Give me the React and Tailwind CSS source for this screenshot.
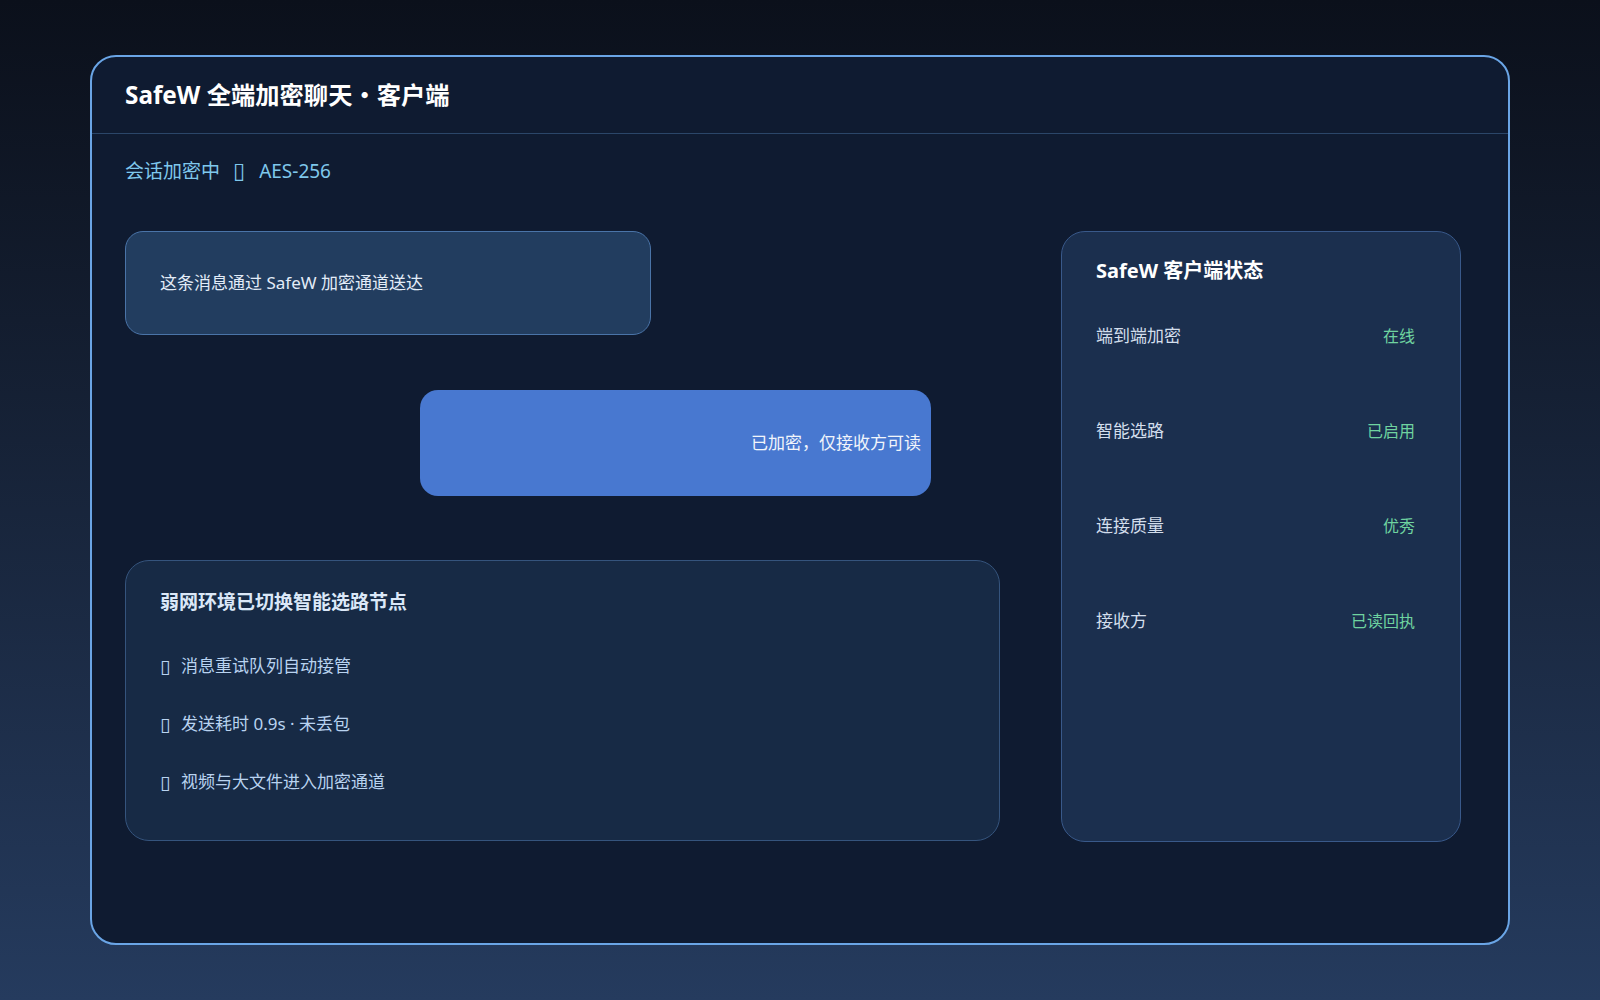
import React from "react";

const statusRows = [
  { label: "端到端加密", value: "在线" },
  { label: "智能选路", value: "已启用" },
  { label: "连接质量", value: "优秀" },
  { label: "接收方", value: "已读回执" },
];

const notes = ["消息重试队列自动接管", "发送耗时 0.9s · 未丢包", "视频与大文件进入加密通道"];

const App = () => {
  return (
    <div className="min-h-screen w-full bg-gradient-to-b from-[#0b101b] to-[#253b5e] flex justify-center pt-[55px] font-['Noto_Sans','Noto_Sans_CJK_SC',sans-serif]">
      <div className="w-[1420px] h-[890px] rounded-[26px] border-2 border-[#6aa5e6] bg-[#0f1b31] overflow-hidden">
        {/* header */}
        <div className="h-[77px] flex items-center px-[33px] border-b border-[#2b4669]">
          <h1 className="text-[24.3px] font-bold text-white leading-8">SafeW 全端加密聊天・客户端</h1>
        </div>

        <div className="px-[33px]">
          <div className="mt-[24px] h-[26px] flex items-center text-[19px] text-[#7fc8ec] leading-[26px]">
            <span>会话加密中</span>
            <span className="ml-[13px] font-['DejaVu_Sans'] text-[22px] leading-[26px]">▯</span>
            <span className="ml-[14px]">AES-256</span>
          </div>

          <div className="mt-[47px] flex gap-[61px]">
            {/* chat column */}
            <div className="w-[875px] flex flex-col">
              <div className="w-[526px] h-[104px] rounded-[18px] border border-[#4a74a8] bg-[#223d5f] flex items-center pl-[34px]">
                <p className="text-[17px] text-[#e2ecf8] leading-6">这条消息通过 SafeW 加密通道送达</p>
              </div>

              <div className="mt-[55px] ml-[295px] w-[511px] h-[106px] rounded-[18px] bg-[#4878d0] flex items-center justify-end pr-[10px]">
                <p className="text-[17px] text-[#f1f5fb] leading-6">已加密，仅接收方可读</p>
              </div>

              <div className="mt-[64px] h-[281px] rounded-[24px] border border-[#35547d] bg-[#172a45] pl-[34px] pt-[27px]">
                <h3 className="text-[19px] font-bold text-[#dbe8f8] leading-7">弱网环境已切换智能选路节点</h3>
                <div className="mt-[38px] flex flex-col gap-[34px]">
                  {notes.map((n) => (
                    <div key={n} className="flex items-center text-[17px] text-[#b9d3f0] leading-6">
                      <span className="w-[21px] font-['DejaVu_Sans'] text-[19px] leading-6">▯</span>
                      <span>{n}</span>
                    </div>
                  ))}
                </div>
              </div>
            </div>

            {/* status panel */}
            <div className="w-[400px] h-[611px] rounded-[24px] border border-[#39598a] bg-[#1b2f4e] pl-[34px] pr-[45px] pt-[25px]">
              <h3 className="text-[20px] font-bold text-white leading-7">SafeW 客户端状态</h3>
              <div className="mt-[39px] flex flex-col gap-[71px]">
                {statusRows.map((r) => (
                  <div key={r.label} className="flex items-center justify-between leading-6">
                    <span className="text-[17px] text-[#d3deec]">{r.label}</span>
                    <span className="text-[16px] text-[#6fd3a0]">{r.value}</span>
                  </div>
                ))}
              </div>
            </div>
          </div>
        </div>
      </div>
    </div>
  );
};

export default App;
